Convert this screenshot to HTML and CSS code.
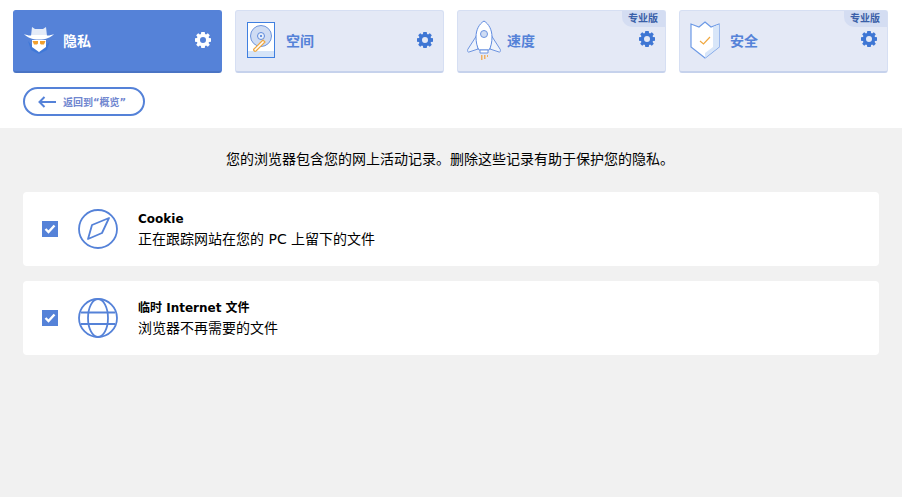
FILE: index.html
```html
<!DOCTYPE html>
<html lang="zh-CN">
<head>
<meta charset="utf-8">
<title>隐私</title>
<link rel="stylesheet" href="styles.css">
</head>
<body>
<svg class="defs" width="0" height="0" aria-hidden="true">
  <symbol id="gear" viewBox="0 0 16 16">
    <path fill="currentColor" fill-rule="evenodd" d="M6.300 0h3.400l.4 2 1 .4L12.800 1.200 14.800 3.200 13.600 4.900l.4 1 2 .4v3.400l-2 .4-.4 1 1.200 1.700-2 2-1.700-1.200-1 .4-.4 2H6.300l-.4-2-1-.4-1.700 1.200-2-2 1.200-1.700-.4-1-2-.4V6.300l2-.4.400-1L1.200 3.200l2-2L4.900 2.400l1-.4zM8 5a3 3 0 1 0 0 6 3 3 0 0 0 0-6z"/>
  </symbol>
</svg>

<nav class="tabs">
  <div class="tab active">
    <svg class="tab-icon hat" width="32" height="28" viewBox="0 0 32 28">
      <path d="M5 15l11 12 11-12-3 9-8 4-8-4z" fill="#3f78d8"/>
      <path d="M9 14h14v7l-7 5-7-5z" fill="#fff"/>
      <path d="M9.500 15h5.500v2.500l-1 1h-3zM17 15h5.500l-1.500 3.500h-3l-1-1z" fill="#f0a030"/>
      <path d="M9 1l3 2h8l3-2 1 9H8z" fill="#e4ebf8"/>
      <path d="M1 8c4 1.500 6 2 8 1h14c2 1 4 .5 8-1-3 3.500-8 5.500-15 5.500S4 11.500 1 8z" fill="#fff"/>
    </svg>
    <span class="tab-label">隐私</span>
    <svg class="gear" width="16" height="16"><use href="#gear"/></svg>
  </div>
  <div class="tab">
    <svg class="tab-icon disk" width="28" height="36" viewBox="0 0 28 36">
      <rect x=".5" y=".5" width="27" height="35" fill="#fff" stroke="#3f7fe0"/>
      <rect x="1" y="29" width="26" height="6" fill="#d5e4f8"/>
      <circle cx="14" cy="14" r="10.500" fill="#cfdcf3" stroke="#6d94dc"/>
      <circle cx="14" cy="14" r="3.500" fill="#e8effa" stroke="#5f8bdc"/>
      <circle cx="14" cy="14" r="1" fill="#3f78d8"/>
      <path d="M16 18l-9 9c-1 1 .5 3 2 2l9-9z" fill="#fff" stroke="#f0a840" stroke-width="1.200"/>
    </svg>
    <span class="tab-label">空间</span>
    <svg class="gear" width="16" height="16"><use href="#gear"/></svg>
  </div>
  <div class="tab pro">
    <svg class="tab-icon rocket" width="34" height="42" viewBox="0 0 34 42">
      <path d="M10 15L1 29c-1 1 0 4 1 3l9-3zM24 15l9 14c1 1 0 4-1 3l-9-3z" fill="#eef3fb" stroke="#6d94e0"/>
      <path d="M17 1c5 3 8 9 8 16 0 5-1 10-3 13H12c-2-3-3-8-3-13C9 10 12 4 17 1z" fill="#fff" stroke="#5f8be0"/>
      <circle cx="17" cy="14" r="3.500" fill="#cfdcf3" stroke="#6d94e0"/>
      <path d="M13 30h8v3h-8z" fill="#fff" stroke="#6d94e0"/>
      <path d="M14 35h1.500v5H14zM17 35h1.500v4H17zM20 35h1v2h-1z" fill="#f0b060"/>
    </svg>
    <span class="tab-label">速度</span>
    <span class="badge">专业版</span>
    <svg class="gear" width="16" height="16"><use href="#gear"/></svg>
  </div>
  <div class="tab pro">
    <svg class="tab-icon shield" width="30" height="38" viewBox="0 0 30 38">
      <path d="M15 1l6 5 8-3v23L15 37 1 26V3l8 3z" fill="#fff" stroke="#6d9ae6" stroke-width="1.200"/>
      <path d="M29 3.500V26L15 37V32l8-6V6z" fill="#d8e6f9"/>
      <path d="M10 20l3.500 3 6.500-7" fill="none" stroke="#f0a840" stroke-width="1.200"/>
    </svg>
    <span class="tab-label">安全</span>
    <span class="badge">专业版</span>
    <svg class="gear" width="16" height="16"><use href="#gear"/></svg>
  </div>
</nav>

<div class="back-row">
  <a class="back">
    <svg width="18" height="12" viewBox="0 0 18 12"><path d="M6.500 1L1.500 6l5 5M1.500 6H18" fill="none" stroke="#5582d8" stroke-width="2"/></svg>
    <span>返回到“概览”</span>
  </a>
</div>

<main class="content">
  <p class="intro">您的浏览器包含您的网上活动记录。删除这些记录有助于保护您的隐私。</p>
  <section class="card">
    <span class="check"><svg width="12" height="10" viewBox="0 0 12 10"><path d="M1.500 5l3 3 6-6.500" fill="none" stroke="#fff" stroke-width="2.400"/></svg></span>
    <svg class="card-icon" width="40" height="40" viewBox="0 0 40 40" fill="none" stroke="#5582d8" stroke-width="1.800">
      <circle cx="20" cy="20" r="19"/>
      <path d="M31 9L24 24 10 30 14 16z" stroke-linejoin="round"/>
    </svg>
    <div class="card-text">
      <div class="card-title">Cookie</div>
      <div class="card-desc">正在跟踪网站在您的 PC 上留下的文件</div>
    </div>
  </section>
  <section class="card">
    <span class="check"><svg width="12" height="10" viewBox="0 0 12 10"><path d="M1.500 5l3 3 6-6.500" fill="none" stroke="#fff" stroke-width="2.400"/></svg></span>
    <svg class="card-icon" width="40" height="40" viewBox="0 0 40 40" fill="none" stroke="#5582d8" stroke-width="1.800">
      <circle cx="20" cy="20" r="19"/>
      <ellipse cx="20" cy="20" rx="10" ry="19"/>
      <path d="M3 14.500h34M3 26h34"/>
    </svg>
    <div class="card-text">
      <div class="card-title">临时 Internet 文件</div>
      <div class="card-desc">浏览器不再需要的文件</div>
    </div>
  </section>
</main>
</body>
</html>
```
FILE: styles.css
```css
* { box-sizing: border-box; }
html, body { height: 100%; }
body {
  margin: 0;
  background: #fff;
  color: #000;
  font-family: "DejaVu Sans", "Noto Sans CJK SC", sans-serif;
  font-size: 14px;
  display: flex;
  flex-direction: column;
  overflow: hidden;
}
.defs { position: absolute; }
.tabs { display: flex; gap: 13px; padding: 10px 14px 0 13px; }
.tab {
  position: relative;
  flex: 0 0 209px;
  height: 63px;
  display: flex;
  align-items: center;
  padding: 0 10px 0 9px;
  background: #e4e9f6;
  border: 1px solid #d6dff3;
  border-bottom: 2px solid #c6d2ec;
  border-radius: 3px;
  color: #5582d8;
}
.tab.active { background: #5582d8; border-color: #5582d8; border-bottom-color: #4a74c4; color: #fff; }
.tab-icon { flex: none; }
.hat { margin-bottom: 2px; }
.disk { margin-left: 2px; margin-bottom: 2px; }
.rocket { margin-bottom: 0; }
.shield { margin-left: 1px; margin-bottom: 2px; }
.tab-label {
  font-weight: 700;
  font-size: 14px;
  margin-left: 10px;
  flex: 1;
  margin-bottom: 3px;
}
.hat + .tab-label { margin-left: 8px; }
.disk + .tab-label { margin-left: 11px; }
.rocket + .tab-label { margin-left: 6px; }
.gear { color: #3e76d4; flex: none; margin-bottom: 2px; }
.pro .gear { margin-bottom: 4px; }
.tab.active .gear { color: #fff; }
.badge {
  position: absolute;
  top: 0;
  right: 0;
  padding: 0 7px 0 6px;
  height: 16px;
  line-height: 16px;
  font-size: 10px;
  font-weight: 700;
  color: #3a5fa8;
  background: #d4ddf2;
  border-bottom-left-radius: 10px;
}
.back-row { padding: 14px 0 12px 23px; }
.back {
  display: inline-flex;
  align-items: center;
  width: 122px;
  height: 29px;
  padding-left: 13px;
  gap: 7px;
  border: 2px solid #5582d8;
  border-radius: 15px;
  color: #6f86cf;
  font-size: 10px;
  font-weight: 700;
}
.content { flex: 1; background: #f1f1f1; padding: 23px 23px 0; }
.intro { margin: 0 0 24px; text-align: center; font-size: 14px; line-height: 17px; padding-right: 2px; }
.card {
  display: flex;
  align-items: center;
  height: 74px;
  margin-bottom: 15px;
  padding-left: 19px;
  background: #fff;
  border-radius: 4px;
}
.check {
  flex: none;
  width: 16px;
  height: 16px;
  background: #5582d8;
  display: flex;
  align-items: center;
  justify-content: center;
}
.card-icon { flex: none; margin-left: 20px; }
.card-text { margin-left: 20px; padding-top: 2px; }
.card-title { font-size: 12px; font-weight: 700; line-height: 18px; }
.card-desc { font-size: 14px; line-height: 21px; margin-top: 1px; }
```
